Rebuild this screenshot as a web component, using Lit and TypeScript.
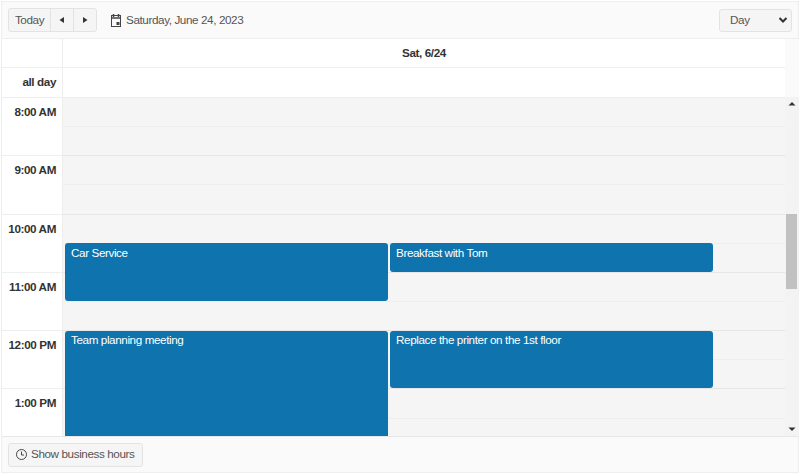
import { LitElement, html, css, svg } from "lit";
import { customElement } from "lit/decorators.js";

const HOURS = ["8:00 AM", "9:00 AM", "10:00 AM", "11:00 AM", "12:00 PM", "1:00 PM"];
const EVENTS = [
  { t: "Car Service", left: 2, top: 146, w: 323, h: 58, pad: 3 },
  { t: "Breakfast with Tom", left: 327, top: 146, w: 323, h: 29, pad: 3 },
  { t: "Team planning meeting", left: 2, top: 234, w: 323, h: 120, pad: 2 },
  { t: "Replace the printer on the 1st floor", left: 327, top: 234, w: 323, h: 57, pad: 2 },
];

@customElement("app-root")
export class AppRoot extends LitElement {
  static styles = css`
    :host { display: block; width: 800px; height: 474px; box-sizing: border-box; padding: 1px;
      font-family: "Liberation Sans", Arial, sans-serif; font-size: 11.7px; letter-spacing: -0.4px; color: #444; background: #fff; }
    .widget { height: 472px; box-sizing: border-box; border: 1px solid #eee; display: flex; flex-direction: column; background: #fff; }
    .toolbar { height: 37px; flex: none; box-sizing: border-box; background: #fafafa; border-bottom: 1px solid #eee;
      display: flex; align-items: center; padding: 0 6px; }
    .group { display: flex; height: 24px; box-sizing: border-box; border: 1px solid #e3e3e3; border-radius: 3px; background: #f5f5f5; color: #555; }
    .group > div { display: flex; align-items: center; justify-content: center; border-left: 1px solid #e3e3e3; box-sizing: border-box; }
    .group > div:first-child { border-left: 0; }
    .today { width: 41px; padding-bottom: 2px; }
    .nav { width: 23px; }
    .date { display: flex; align-items: center; margin-left: 14px; color: #555; gap: 5px; }
    .lift { padding-bottom: 2px; }
    .spacer { flex: 1; }
    .select { width: 73px; height: 23px; box-sizing: border-box; border: 1px solid #e3e3e3; border-radius: 3px; background: #f5f5f5;
      color: #555; display: flex; align-items: center; justify-content: space-between; padding: 0 3px 0 10px; }
    .body { height: 397px; flex: none; display: flex; }
    .main { width: 783px; flex: none; display: flex; flex-direction: column; }
    .hrow { display: flex; flex: none; border-bottom: 1px solid #eee; box-sizing: border-box; }
    .hrow.h1 { height: 29px; }
    .hrow.h2 { height: 30px; }
    .tcell { width: 61px; flex: none; box-sizing: border-box; border-right: 1px solid #eee; text-align: right; padding-right: 6px; font-weight: 700; color: #333; }
    .h2 .tcell { padding-top: 7px; }
    .dayhead { flex: 1; text-align: center; font-weight: 700; color: #333; padding-top: 7px; }
    .rows { flex: 1; display: flex; overflow: hidden; }
    .times { width: 61px; flex: none; box-sizing: border-box; border-right: 1px solid #eee; background: #fff; }
    .time { height: 58.3px; box-sizing: border-box; border-bottom: 1px solid #eee; text-align: right; padding: 7px 6px 0 0; font-weight: 700; color: #333; }
    .grid { flex: 1; position: relative; background: #f5f5f5; overflow: hidden; }
    .slot { height: 29.15px; box-sizing: border-box; border-bottom: 1px solid #eee; }
    .slot.hr { border-bottom-color: #e6e6e6; }
    .event { position: absolute; box-sizing: border-box; background: #0f73ad; border-radius: 3px; color: #fff; padding: 3px 6px; margin-top: -1px; }
    .sb { width: 14px; flex: none; background: #f3f3f3; display: flex; flex-direction: column; align-items: center; }
    .sbspace { height: 58px; width: 100%; flex: none; background: #fafafa; }
    .arrow { height: 14px; flex: none; display: flex; align-items: center; justify-content: center; }
    .track { flex: 1; width: 100%; box-sizing: border-box; padding: 103px 2px 0 1px; }
    .thumb { height: 75px; background: #c1c1c1; }
    .footer { flex: 1; box-sizing: border-box; background: #fafafa; border-top: 1px solid #e8e8e8; display: flex; align-items: center; padding: 0 6px; }
    .btn { height: 24px; box-sizing: border-box; border: 1px solid #e3e3e3; border-radius: 3px; background: #f5f5f5; color: #555;
      display: flex; align-items: center; gap: 4px; padding: 0 7px; }
  `;

  private tri(points: string, fill = "#333") {
    return html`<svg width="8" height="8" viewBox="0 0 8 8">${svg`<polygon points=${points} fill=${fill}></polygon>`}</svg>`;
  }

  render() {
    const slots = [];
    for (let i = 0; i < 12; i++) slots.push(html`<div class="slot ${i % 2 ? "hr" : ""}"></div>`);
    return html`<div class="widget">
      <div class="toolbar">
        <div class="group">
          <div class="today">Today</div>
          <div class="nav">${this.tri("1.5,4 6,1 6,7")}</div>
          <div class="nav">${this.tri("2,1 6.5,4 2,7")}</div>
        </div>
        <div class="date">
          <svg width="10" height="13" viewBox="0 0 10 13" fill="none" stroke="#444" stroke-width="1">
            <rect x="0.5" y="1.5" width="9" height="11"></rect>
            <path d="M0.5 4h9M2.5 0v3M7.5 0v3" stroke-width="1.5"></path>
            <rect x="5.5" y="8" width="3" height="3" fill="#444" stroke="none"></rect>
          </svg>
          <span class="lift">Saturday, June 24, 2023</span>
        </div>
        <div class="spacer"></div>
        <div class="select">
          <span class="lift">Day</span>
          <svg width="10" height="8" viewBox="0 0 10 8" fill="none" stroke="#333" stroke-width="2"><path d="M1.5 2l3.5 3.5 3.5-3.5"></path></svg>
        </div>
      </div>
      <div class="body">
        <div class="main">
          <div class="hrow h1"><div class="tcell"></div><div class="dayhead">Sat, 6/24</div></div>
          <div class="hrow h2"><div class="tcell">all day</div><div></div></div>
          <div class="rows">
            <div class="times">${HOURS.map((h) => html`<div class="time">${h}</div>`)}</div>
            <div class="grid">
              ${slots}
              ${EVENTS.map((e) => html`<div class="event" style="left:${e.left}px;top:${e.top}px;width:${e.w}px;height:${e.h}px;padding-top:${e.pad}px">${e.t}</div>`)}
            </div>
          </div>
        </div>
        <div class="sb">
          <div class="sbspace"></div>
          <div class="arrow">${this.tri("0.5,5.5 4,2 7.5,5.5")}</div>
          <div class="track"><div class="thumb"></div></div>
          <div class="arrow">${this.tri("0.5,2.5 7.5,2.5 4,6")}</div>
        </div>
      </div>
      <div class="footer">
        <div class="btn">
          <svg width="11" height="11" viewBox="0 0 11 11" fill="none" stroke="#444" stroke-width="1"><circle cx="5.5" cy="5.5" r="5"></circle><path d="M5.5 2.5v3.5h2.5"></path></svg>
          <span class="lift">Show business hours</span>
        </div>
      </div>
    </div>`;
  }
}
